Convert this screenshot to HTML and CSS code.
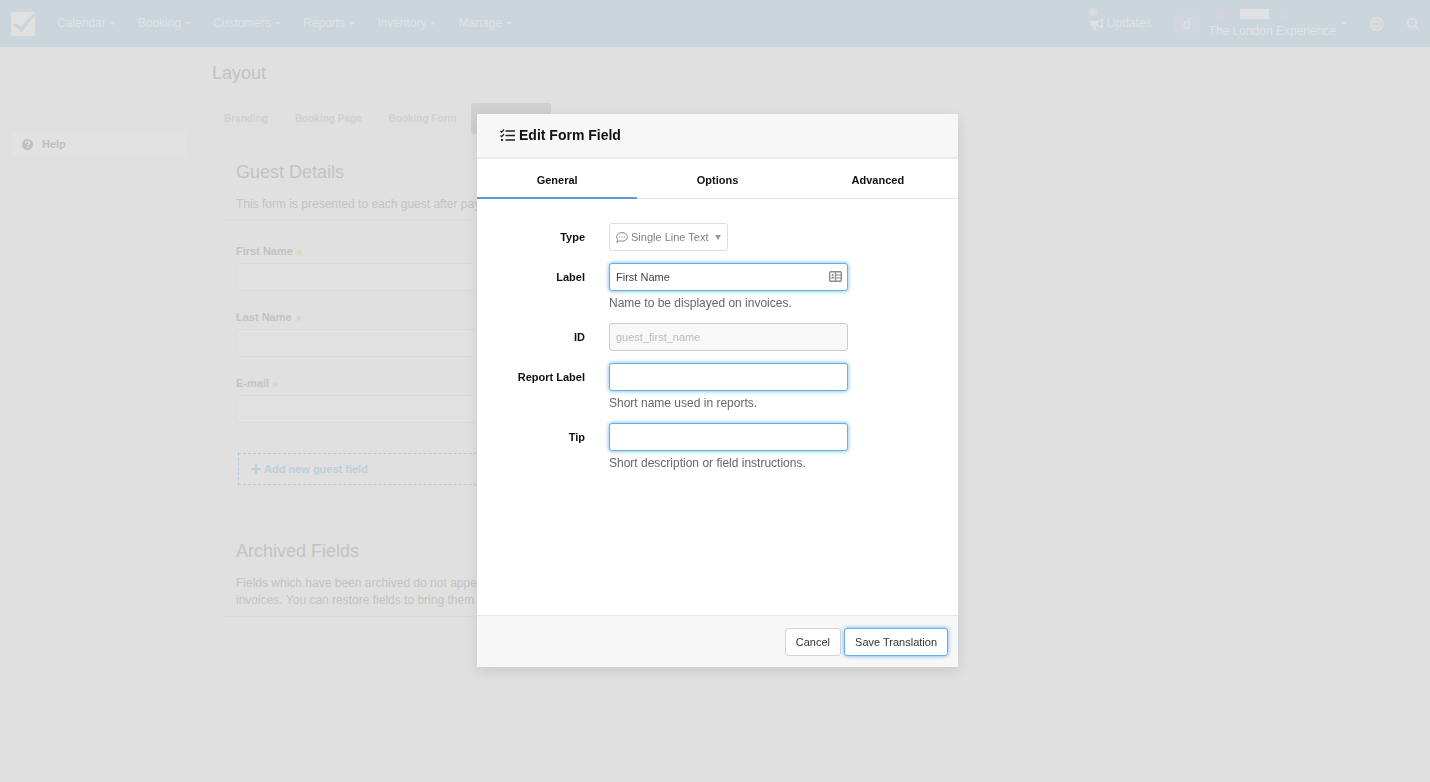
FILE: index.html
```html
<!DOCTYPE html>
<html lang="en">
<head>
  <meta charset="UTF-8" />
  <meta name="viewport" content="width=device-width, initial-scale=1.0" />
  <title>Layout</title>
  <link rel="stylesheet" href="styles.css">
</head>
<body>
  <header class="topbar">
    <a href="#" class="logo" aria-label="Home">
      <svg width="24" height="24" viewBox="0 0 24 24">
        <rect width="24" height="24" rx="2" fill="#e1e1e1"/>
        <path d="M2 13l3-2 5 3.500L22 1.500 24 3 10.500 20.500z" fill="#cbd5dc"/>
      </svg>
    </a>
    <nav class="main-nav">
      <a href="#">Calendar <span class="caret"></span></a>
      <a href="#">Booking <span class="caret"></span></a>
      <a href="#">Customers <span class="caret"></span></a>
      <a href="#">Reports <span class="caret"></span></a>
      <a href="#">Inventory <span class="caret"></span></a>
      <a href="#">Manage <span class="caret"></span></a>
    </nav>
    <div class="topbar-right">
      <a href="#" class="updates">
        <span class="dot"></span>
        <svg width="14" height="12" viewBox="0 0 14 12">
          <path d="M1 3h6v5H1a1 1 0 0 1-1-1V4a1 1 0 0 1 1-1z" fill="#e0e1e2"/>
          <path d="M2.500 8h3L6.500 12H3.500z" fill="#e0e1e2"/>
          <path d="M7 3.700C9 3.500 10.800 2.600 12.300 1.200v8.600C10.800 8.400 9 7.500 7 7.300z" fill="none" stroke="#e0e1e2" stroke-width="1.400" stroke-linejoin="round"/>
          <path d="M12.500 4.500a1 1 0 0 1 0 2z" fill="#e0e1e2"/>
        </svg>
        Updates
      </a>
      <a href="#" class="account">
        <span class="avatar">d</span>
        <span class="account-text">
          <span class="masked"><i class="m1"></i><i class="m2"></i><i class="m3"></i></span>
          <span class="account-name">The London Experience</span>
        </span>
        <span class="caret"></span>
      </a>
      <a href="#" class="icon-link" aria-label="Support">
        <svg width="14" height="14" viewBox="0 0 14 14" fill="none" stroke="#e0e1e2">
          <circle cx="7" cy="7" r="6.300" stroke-width="1.200"/>
          <circle cx="7" cy="7" r="2.700" stroke-width="1.200"/>
          <path d="M5 1.500v3M9 1.500v3M5 9.500v3M9 9.500v3M1.500 5h3M1.500 9h3M9.500 5h3M9.500 9h3" stroke-width="1"/>
        </svg>
      </a>
      <a href="#" class="icon-link" aria-label="Search">
        <svg width="12" height="12" viewBox="0 0 12 12" fill="none" stroke="#e0e1e2" stroke-width="1.600">
          <circle cx="5" cy="5" r="4.200"/>
          <path d="M8 8l3.500 3.500"/>
        </svg>
      </a>
    </div>
  </header>

  <div class="page">
    <aside class="sidebar">
      <a href="#" class="help-link">
        <svg width="11" height="11" viewBox="0 0 11 11">
          <circle cx="5.500" cy="5.500" r="5.500" fill="#c0c0c1"/>
          <path d="M3.600 4.200c.100-2.200 3.900-2.200 3.900 0 0 1.300-1.800 1.200-1.800 2.500M5.700 7.700v1.300" fill="none" stroke="#e1e1e1" stroke-width="1.400"/>
        </svg>
        Help
      </a>
    </aside>

    <main class="content">
      <h1>Layout</h1>
      <div class="page-tabs">
        <a href="#">Branding</a>
        <a href="#">Booking Page</a>
        <a href="#">Booking Form</a>
        <a href="#" class="active">Guest Form</a>
      </div>

      <section class="block">
        <div class="block-head">
          <h2>Guest Details</h2>
          <p>This form is presented to each guest after payment.</p>
        </div>
        <div class="guest-field">
          <label for="first">First Name <span class="star">★</span></label>
          <input type="text" id="first">
        </div>
        <div class="guest-field">
          <label for="last">Last Name <span class="star">★</span></label>
          <input type="text" id="last">
        </div>
        <div class="guest-field">
          <label for="email">E-mail <span class="star">★</span></label>
          <input type="text" id="email">
        </div>
        <button class="add-field">
          <svg width="10" height="10" viewBox="0 0 10 10"><path d="M5 0v10M0 5h10" stroke="#bccfdb" stroke-width="2"/></svg>
          Add new guest field
        </button>
      </section>

      <section class="block archived">
        <div class="block-head">
          <h2>Archived Fields</h2>
          <p>Fields which have been archived do not appear on forms or<br>invoices. You can restore fields to bring them back.</p>
        </div>
      </section>
    </main>
  </div>

  <div class="modal-wrap">
    <div class="modal" role="dialog" aria-labelledby="modalTitle">
      <div class="modal-header">
        <svg width="15" height="13" viewBox="0 0 15 13" fill="none" stroke="#222">
          <path d="M5.500 2h9.500M5.500 6.500h9.500M5.500 11h9.500" stroke-width="1.500"/>
          <path d="M.500 2l1.200 1.200L4 .500M.500 6.500l1.200 1.200L4 5" stroke-width="1.200"/>
          <path d="M1 11h2" stroke-width="2"/>
        </svg>
        <h3 id="modalTitle">Edit Form Field</h3>
      </div>
      <div class="modal-tabs">
        <button class="active">General</button>
        <button>Options</button>
        <button>Advanced</button>
      </div>
      <form class="modal-body">
        <div class="row">
          <label for="type">Type</label>
          <div class="control type-control">
            <svg class="type-icon" width="12" height="11" viewBox="0 0 12 11">
              <path d="M6 .600c3 0 5.400 1.900 5.400 4.300S9 9.200 6 9.200c-.800 0-1.500-.100-2.200-.400-.800.700-1.800 1.200-3.200 1.400.700-.800 1.200-1.600 1.200-2.400C1 7 .600 6 .600 4.900.600 2.500 3 .600 6 .600z" fill="none" stroke="#888"/>
              <path d="M3 5h1.200M5.400 5h1.200M7.800 5H9" stroke="#888" stroke-width="1.200"/>
            </svg>
            <select id="type"><option>Single Line Text</option></select>
            <span class="caret"></span>
          </div>
        </div>
        <div class="row">
          <label for="label">Label</label>
          <div class="control">
            <input type="text" id="label" class="editable" value="First Name">
            <svg class="card-icon" width="13" height="11" viewBox="0 0 13 11">
              <rect x=".700" y=".700" width="11.600" height="9.600" rx="1" fill="#fff" stroke="#8c8c8c" stroke-width="1.400"/>
              <path d="M6.500 1v9M6.500 4h6M6.500 7h6" stroke="#8c8c8c" stroke-width="1.200"/>
              <circle cx="3.700" cy="4" r="1" fill="#8c8c8c"/>
              <path d="M2 7.500c0-2.500 3.400-2.500 3.400 0z" fill="#8c8c8c"/>
            </svg>
            <p class="hint">Name to be displayed on invoices.</p>
          </div>
        </div>
        <div class="row">
          <label for="fieldId">ID</label>
          <div class="control">
            <input type="text" id="fieldId" value="guest_first_name" disabled>
          </div>
        </div>
        <div class="row">
          <label for="report">Report Label</label>
          <div class="control">
            <input type="text" id="report" class="editable">
            <p class="hint">Short name used in reports.</p>
          </div>
        </div>
        <div class="row">
          <label for="tip">Tip</label>
          <div class="control">
            <input type="text" id="tip" class="editable">
            <p class="hint">Short description or field instructions.</p>
          </div>
        </div>
      </form>
      <div class="modal-footer">
        <button class="btn">Cancel</button>
        <button class="btn btn-save">Save Translation</button>
      </div>
    </div>
  </div>
</body>
</html>
```
FILE: styles.css
```css
* {
  box-sizing: border-box;
}
body {
  background: #e0e0e0;
  color: #c2c3c4;
  font-family: "Liberation Sans", Arial, sans-serif;
  font-size: 12px;
  line-height: 17px;
  margin: 0;
}
h1, h2, h3, p {
  margin: 0;
}
h1, h2 {
  font-size: 18px;
  line-height: 24px;
  font-weight: normal;
}
a {
  color: inherit;
  text-decoration: none;
}
button, input, select {
  font-family: inherit;
  font-size: 11px;
}
svg {
  flex: none;
}
.caret {
  display: inline-block;
  border: 3px solid transparent;
  border-top-color: currentColor;
  border-bottom: 0;
}

/* top bar */
.topbar {
  display: flex;
  align-items: center;
  height: 47px;
  padding: 0 11px;
  background: #cbd5dc;
  color: #e0e1e2;
}
.logo {
  display: flex;
}
.main-nav {
  display: flex;
  gap: 22px;
  margin-left: 22px;
}
.main-nav a {
  display: flex;
  align-items: center;
  gap: 4px;
}
.topbar-right {
  display: flex;
  align-items: center;
  margin-left: auto;
}
.updates {
  display: flex;
  align-items: center;
  gap: 3px;
  position: relative;
}
.dot {
  position: absolute;
  left: -1px;
  top: -7px;
  width: 8px;
  height: 8px;
  border-radius: 50%;
  background: #dbdbdd;
}
.account {
  display: flex;
  align-items: center;
  margin-left: 22px;
}
.avatar {
  width: 26px;
  height: 26px;
  border-radius: 3px;
  background: #d0d6dd;
  font-size: 14px;
  line-height: 26px;
  text-align: center;
}
.account-text {
  display: flex;
  flex-direction: column;
  margin: 0 5px 0 9px;
}
.account-name {
  line-height: 15px;
}
.masked {
  display: flex;
  height: 10px;
  margin-bottom: 5px;
}
.m1 {
  width: 20px;
  margin: 0 9px 0 2px;
  background: #d0d5dc;
}
.m2 {
  width: 29px;
  background: #e0e1e2;
}
.m3 {
  width: 10px;
  margin-left: 9px;
  background: #ced5dc;
}
.icon-link {
  display: flex;
  margin-left: 23px;
}

/* page behind the dialog */
.page {
  display: flex;
  min-height: calc(100vh - 47px);
}
.sidebar {
  width: 200px;
  padding: 85px 12px 0;
  border-right: 1px solid #dedede;
}
.help-link {
  display: flex;
  align-items: center;
  gap: 9px;
  height: 24px;
  padding-left: 10px;
  border-radius: 3px;
  background: #e2e2e2;
  color: #bfc0c0;
  font-size: 11px;
  font-weight: bold;
}
.content {
  flex: 1;
  max-width: 740px;
  padding: 14px 12px;
}
.page-tabs {
  display: flex;
  gap: 3px;
  margin-top: 18px;
}
.page-tabs a {
  padding: 0 12px;
  border-radius: 3px;
  color: #cfd0d2;
  font-size: 10px;
  font-weight: bold;
  line-height: 31px;
}
.page-tabs a.active {
  background: #cfd0d1;
}
.block {
  margin: 26px 0 0 12px;
}
.archived {
  margin-top: 54px;
}
.block-head {
  padding: 0 12px 7px;
  border-bottom: 1px solid #dbdbdb;
}
.block-head p {
  margin-top: 12px;
}
.guest-field {
  margin-bottom: 18px;
  padding-left: 12px;
}
.block-head + .guest-field {
  margin-top: 22px;
}
.guest-field label {
  display: block;
  height: 17px;
  font-size: 11px;
  font-weight: bold;
}
.star {
  color: #e4d4b8;
  font-size: 8px;
  line-height: 1;
}
.guest-field input {
  display: block;
  width: 100%;
  height: 28px;
  margin-top: 3px;
  border: 1px solid #dbdbdb;
  border-radius: 3px;
  background: #e1e1e1;
}
.add-field {
  display: flex;
  align-items: center;
  gap: 3px;
  width: calc(100% - 14px);
  height: 32px;
  margin: 30px 0 0 14px;
  padding: 0 12px;
  border: 1px dashed #b4cad8;
  background: none;
  color: #bccfdb;
  font-weight: bold;
}

/* dialog */
.modal-wrap {
  position: fixed;
  inset: 0;
  padding: 114px 0 0 5px;
}
.modal {
  width: 481px;
  margin: 0 auto;
  background: #fff;
  box-shadow: 0 4px 12px rgba(0, 0, 0, 0.1);
  color: #111;
}
.modal-header {
  display: flex;
  align-items: center;
  gap: 4px;
  height: 45px;
  padding: 0 23px;
  border-bottom: 2px solid #ececec;
  background: #f7f7f7;
}
.modal-header h3 {
  font-size: 14px;
}
.modal-tabs {
  display: grid;
  grid-template-columns: repeat(3, 1fr);
  height: 40px;
  border-bottom: 1px solid #e2e2e2;
}
.modal-tabs button {
  height: 40px;
  padding: 4px 0 0;
  border: 0;
  border-bottom: 2px solid transparent;
  background: none;
  color: #111;
  font-weight: bold;
}
.modal-tabs .active {
  border-color: #559cde;
}
.modal-body {
  min-height: 416px;
  padding: 24px 0;
}
.row {
  display: flex;
  gap: 24px;
  margin-bottom: 12px;
}
.row > label {
  width: 108px;
  font-size: 11px;
  font-weight: bold;
  line-height: 28px;
  text-align: right;
}
.control {
  position: relative;
  width: 239px;
}
.control input {
  display: block;
  width: 100%;
  height: 28px;
  padding: 0 6px;
  border: 1px solid #ccc;
  border-radius: 3px;
  color: #444;
}
.control input.editable {
  border-color: #66afe9;
  box-shadow: 0 0 4px #66afe9;
}
.control input:disabled {
  background: #f8f8f8;
  color: #bbb;
}
.hint {
  padding-top: 4px;
  color: #666;
  line-height: 16px;
}
.type-control {
  width: 119px;
  color: #999;
}
.type-control select {
  display: block;
  width: 100%;
  height: 28px;
  padding: 0 0 0 21px;
  border: 1px solid #ddd;
  border-radius: 3px;
  background: #fff;
  color: #808080;
  appearance: none;
}
.type-icon {
  position: absolute;
  left: 7px;
  top: 9px;
}
.type-control .caret {
  position: absolute;
  right: 7px;
  top: 12px;
  border-width: 5px 3px 0;
}
.card-icon {
  position: absolute;
  right: 6px;
  top: 8px;
}
.modal-footer {
  display: flex;
  justify-content: flex-end;
  gap: 3px;
  height: 52px;
  padding: 12px 10px;
  border-top: 1px solid #e8e8e8;
  background: #f7f7f7;
}
.btn {
  height: 28px;
  padding: 0 10px;
  border: 1px solid #d4d4d4;
  border-radius: 3px;
  background: #fff;
  color: #333;
}
.btn-save {
  border-color: #66afe9;
  box-shadow: 0 0 4px #66afe9;
}
```
